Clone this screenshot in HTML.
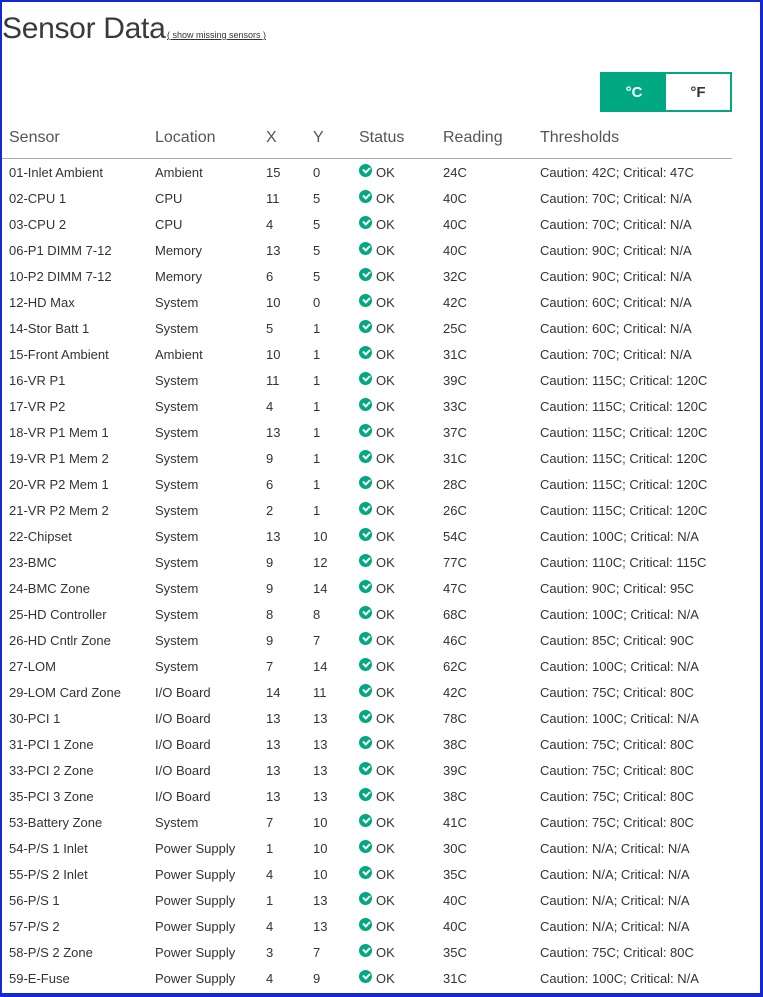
<!DOCTYPE html>
<html><head><meta charset="utf-8"><style>
*{margin:0;padding:0;box-sizing:border-box}
html,body{width:763px;height:997px;overflow:hidden;background:#fff}
body{font-family:"Liberation Sans",sans-serif;color:#333;position:relative}
.frame{position:absolute;left:0;top:0;width:763px;height:997px;border-style:solid;border-color:#1428d4;border-width:2px 3px 4px 2px;pointer-events:none}
h1{position:absolute;left:2px;top:12px;font-weight:normal;font-size:30px;color:#3a3a3a;letter-spacing:-0.3px}
.link{position:absolute;left:167px;top:30px;font-size:9px;color:#333;text-decoration:underline}
.btn{position:absolute;left:600px;top:72px;width:132px;height:40px;border:2px solid #01a982;display:flex}
.btn div{flex:1;display:flex;align-items:center;justify-content:center;font-weight:bold;font-size:15px}
.btn .on{background:#01a982;color:#fff}
.btn .off{color:#333}
.hdr{position:absolute;top:129px;font-size:16px;color:#555}
.line{position:absolute;left:2px;top:158px;width:730px;height:1px;background:#aaa}
.row{position:absolute;left:0;height:26px;font-size:13px;color:#333;width:740px}
.row span{position:absolute;top:0;white-space:nowrap}
.ic{display:inline-block;width:13px;height:13px;border-radius:50%;background:#01a982;position:absolute;top:-1px;left:0}
.ic:after{content:"";position:absolute;left:3.5px;top:3px;width:5px;height:3px;border-left:2px solid #fff;border-bottom:2px solid #fff;transform:rotate(-45deg)}
</style></head><body>
<h1>Sensor Data</h1>
<div class="link">( show missing sensors )</div>
<div class="btn"><div class="on">°C</div><div class="off">°F</div></div>
<div class="hdr" style="left:9px">Sensor</div>
<div class="hdr" style="left:155px">Location</div>
<div class="hdr" style="left:266px">X</div>
<div class="hdr" style="left:313px">Y</div>
<div class="hdr" style="left:359px">Status</div>
<div class="hdr" style="left:443px">Reading</div>
<div class="hdr" style="left:540px">Thresholds</div>
<div class="line"></div>
<div id="rows"></div>
<script>
var d=[
["01-Inlet Ambient","Ambient",15,0,"24C","Caution: 42C; Critical: 47C"],
["02-CPU 1","CPU",11,5,"40C","Caution: 70C; Critical: N/A"],
["03-CPU 2","CPU",4,5,"40C","Caution: 70C; Critical: N/A"],
["06-P1 DIMM 7-12","Memory",13,5,"40C","Caution: 90C; Critical: N/A"],
["10-P2 DIMM 7-12","Memory",6,5,"32C","Caution: 90C; Critical: N/A"],
["12-HD Max","System",10,0,"42C","Caution: 60C; Critical: N/A"],
["14-Stor Batt 1","System",5,1,"25C","Caution: 60C; Critical: N/A"],
["15-Front Ambient","Ambient",10,1,"31C","Caution: 70C; Critical: N/A"],
["16-VR P1","System",11,1,"39C","Caution: 115C; Critical: 120C"],
["17-VR P2","System",4,1,"33C","Caution: 115C; Critical: 120C"],
["18-VR P1 Mem 1","System",13,1,"37C","Caution: 115C; Critical: 120C"],
["19-VR P1 Mem 2","System",9,1,"31C","Caution: 115C; Critical: 120C"],
["20-VR P2 Mem 1","System",6,1,"28C","Caution: 115C; Critical: 120C"],
["21-VR P2 Mem 2","System",2,1,"26C","Caution: 115C; Critical: 120C"],
["22-Chipset","System",13,10,"54C","Caution: 100C; Critical: N/A"],
["23-BMC","System",9,12,"77C","Caution: 110C; Critical: 115C"],
["24-BMC Zone","System",9,14,"47C","Caution: 90C; Critical: 95C"],
["25-HD Controller","System",8,8,"68C","Caution: 100C; Critical: N/A"],
["26-HD Cntlr Zone","System",9,7,"46C","Caution: 85C; Critical: 90C"],
["27-LOM","System",7,14,"62C","Caution: 100C; Critical: N/A"],
["29-LOM Card Zone","I/O Board",14,11,"42C","Caution: 75C; Critical: 80C"],
["30-PCI 1","I/O Board",13,13,"78C","Caution: 100C; Critical: N/A"],
["31-PCI 1 Zone","I/O Board",13,13,"38C","Caution: 75C; Critical: 80C"],
["33-PCI 2 Zone","I/O Board",13,13,"39C","Caution: 75C; Critical: 80C"],
["35-PCI 3 Zone","I/O Board",13,13,"38C","Caution: 75C; Critical: 80C"],
["53-Battery Zone","System",7,10,"41C","Caution: 75C; Critical: 80C"],
["54-P/S 1 Inlet","Power Supply",1,10,"30C","Caution: N/A; Critical: N/A"],
["55-P/S 2 Inlet","Power Supply",4,10,"35C","Caution: N/A; Critical: N/A"],
["56-P/S 1","Power Supply",1,13,"40C","Caution: N/A; Critical: N/A"],
["57-P/S 2","Power Supply",4,13,"40C","Caution: N/A; Critical: N/A"],
["58-P/S 2 Zone","Power Supply",3,7,"35C","Caution: 75C; Critical: 80C"],
["59-E-Fuse","Power Supply",4,9,"31C","Caution: 100C; Critical: N/A"]];
var h="";
d.forEach(function(r,i){
h+='<div class="row" style="top:'+(165+i*26)+'px"><span style="left:9px">'+r[0]+'</span><span style="left:155px">'+r[1]+'</span><span style="left:266px">'+r[2]+'</span><span style="left:313px">'+r[3]+'</span><span style="left:359px"><i class="ic"></i><span style="left:17px">OK</span></span><span style="left:443px">'+r[4]+'</span><span style="left:540px">'+r[5]+'</span></div>';
});
document.getElementById("rows").innerHTML=h;
</script>
<div class="frame"></div>
</body></html>
